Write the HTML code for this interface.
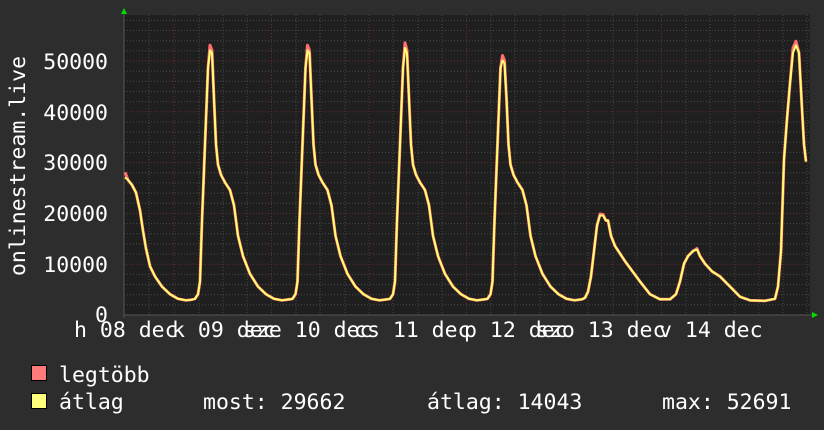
<!DOCTYPE html>
<html><head><meta charset="utf-8"><style>
html,body{margin:0;padding:0;background:#2d2d2d;width:824px;height:430px;overflow:hidden}
svg{display:block}
text{font-family:"DejaVu Sans Mono","Liberation Mono",monospace;fill:#fff;font-size:21.5px}
</style></head><body>
<svg width="824" height="430" viewBox="0 0 824 430">
<rect x="0" y="0" width="824" height="430" fill="#2d2d2d"/>
<rect x="124" y="15" width="686" height="300" fill="#1f1f1f"/>
<g stroke="#4a4a4a" stroke-width="1" stroke-dasharray="1,2">
<line x1="124" x2="810" y1="304.8" y2="304.8"/><line x1="124" x2="810" y1="294.7" y2="294.7"/><line x1="124" x2="810" y1="284.5" y2="284.5"/><line x1="124" x2="810" y1="274.4" y2="274.4"/>
<line x1="124" x2="810" y1="254" y2="254"/><line x1="124" x2="810" y1="243.9" y2="243.9"/><line x1="124" x2="810" y1="233.7" y2="233.7"/><line x1="124" x2="810" y1="223.6" y2="223.6"/>
<line x1="124" x2="810" y1="203.2" y2="203.2"/><line x1="124" x2="810" y1="193.1" y2="193.1"/><line x1="124" x2="810" y1="182.9" y2="182.9"/><line x1="124" x2="810" y1="172.8" y2="172.8"/>
<line x1="124" x2="810" y1="152.4" y2="152.4"/><line x1="124" x2="810" y1="142.3" y2="142.3"/><line x1="124" x2="810" y1="132.1" y2="132.1"/><line x1="124" x2="810" y1="122" y2="122"/>
<line x1="124" x2="810" y1="101.6" y2="101.6"/><line x1="124" x2="810" y1="91.5" y2="91.5"/><line x1="124" x2="810" y1="81.3" y2="81.3"/><line x1="124" x2="810" y1="71.2" y2="71.2"/>
<line x1="124" x2="810" y1="50.8" y2="50.8"/><line x1="124" x2="810" y1="40.7" y2="40.7"/><line x1="124" x2="810" y1="30.5" y2="30.5"/><line x1="124" x2="810" y1="20.4" y2="20.4"/>
<line x1="149" x2="149" y1="15" y2="318"/><line x1="199" x2="199" y1="15" y2="318"/><line x1="223" x2="223" y1="15" y2="318"/><line x1="247" x2="247" y1="15" y2="318"/>
<line x1="296" x2="296" y1="15" y2="318"/><line x1="320" x2="320" y1="15" y2="318"/><line x1="345" x2="345" y1="15" y2="318"/>
<line x1="393" x2="393" y1="15" y2="318"/><line x1="418" x2="418" y1="15" y2="318"/><line x1="442" x2="442" y1="15" y2="318"/>
<line x1="491" x2="491" y1="15" y2="318"/><line x1="515" x2="515" y1="15" y2="318"/><line x1="540" x2="540" y1="15" y2="318"/>
<line x1="588" x2="588" y1="15" y2="318"/><line x1="613" x2="613" y1="15" y2="318"/><line x1="637" x2="637" y1="15" y2="318"/>
<line x1="686" x2="686" y1="15" y2="318"/><line x1="710" x2="710" y1="15" y2="318"/><line x1="735" x2="735" y1="15" y2="318"/>
<line x1="783" x2="783" y1="15" y2="318"/><line x1="807" x2="807" y1="15" y2="318"/>
</g>
<g stroke="#6a2e2e" stroke-width="1" stroke-dasharray="1,2">
<line x1="124" x2="810" y1="264.2" y2="264.2"/><line x1="124" x2="810" y1="213.4" y2="213.4"/><line x1="124" x2="810" y1="162.6" y2="162.6"/><line x1="124" x2="810" y1="111.8" y2="111.8"/><line x1="124" x2="810" y1="61" y2="61"/>
<line x1="174" x2="174" y1="15" y2="318"/><line x1="271.5" x2="271.5" y1="15" y2="318"/><line x1="369" x2="369" y1="15" y2="318"/><line x1="466.5" x2="466.5" y1="15" y2="318"/><line x1="564" x2="564" y1="15" y2="318"/><line x1="661.5" x2="661.5" y1="15" y2="318"/><line x1="759" x2="759" y1="15" y2="318"/>
</g>
<line x1="124" y1="315" x2="812" y2="315" stroke="#555"/>
<line x1="124" y1="12" x2="124" y2="318" stroke="#555"/>
<polygon points="121,14 127,14 124,8" fill="#00dd00"/>
<polygon points="812,312 812,318 818,315" fill="#00dd00"/>
<g transform="translate(0,312) scale(1,-5.08)">
<polyline fill="none" stroke="#ff6f6f" stroke-width="3" vector-effect="non-scaling-stroke" stroke-linejoin="round" points="125,27.5 128,26 132,25 136,23.5 140,20 143,16 146,12.5 150,9 155,7 162,5 170,3.5 178,2.6 186,2.3 191,2.4 195,2.6 198,3.5 200,6 202,18 204,28 206,38 208,48 210,52.5 212,51.5 214,42 216,33 218,29 221,27 225,25.5 230,24 234,21 238,15 243,11 250,7.5 258,5 266,3.5 274,2.6 282,2.3 290,2.5 292.5,2.6 295.5,3.5 297.5,6 299.5,18 301.5,28 303.5,38 305.5,48 307.5,52.5 309.5,51.5 311.5,42 313.5,33 315.5,29 318.5,27 322.5,25.5 327.5,24 331.5,21 335.5,15 340.5,11 347.5,7.5 355.5,5 363.5,3.5 371.5,2.6 379.5,2.3 387.5,2.5 390,2.6 393,3.5 395,6 397,18 399,28 401,38 403,48 405,53 407,51.5 409,42 411,33 413,29 416,27 420,25.5 425,24 429,21 433,15 438,11 445,7.5 453,5 461,3.5 469,2.6 477,2.3 485,2.5 487.5,2.6 490.5,3.5 492.5,6 494.5,18 496.5,28 498.5,38 500.5,48 502.5,50.5 504.5,49.5 506.5,42 508.5,33 510.5,29 513.5,27 517.5,25.5 522.5,24 526.5,21 530.5,15 535.5,11 542.5,7.5 550.5,5 558.5,3.5 566.5,2.6 574.5,2.3 582,2.5 585,2.8 588,4 591,7 594,12 597,17 600,19.3 603,19.2 606,18 608,18 611,15 615,13 625,10 640,6 650,3.5 660,2.5 670,2.5 676,3.5 680,6 684,9.5 688,11 693,12 697,12.5 700,11 705,9.5 712,8 720,7 730,5 740,3 750,2.3 765,2.2 775,2.6 778,5 781,12 784,30 787,38 790,45 793,52 796,53.3 799,51 802,40 804,33 806,29.6"/>
<polyline fill="none" stroke="#ffff70" stroke-width="2" vector-effect="non-scaling-stroke" stroke-linejoin="round" points="125,26.5 128,26 132,25 136,23.5 140,20 143,16 146,12.5 150,9 155,7 162,5 170,3.5 178,2.6 186,2.3 191,2.4 195,2.6 198,3.5 200,6 202,18 204,28 206,38 208,48 210,51.5 212,51 214,42 216,33 218,29 221,27 225,25.5 230,24 234,21 238,15 243,11 250,7.5 258,5 266,3.5 274,2.6 282,2.3 290,2.5 292.5,2.6 295.5,3.5 297.5,6 299.5,18 301.5,28 303.5,38 305.5,48 307.5,51.5 309.5,51 311.5,42 313.5,33 315.5,29 318.5,27 322.5,25.5 327.5,24 331.5,21 335.5,15 340.5,11 347.5,7.5 355.5,5 363.5,3.5 371.5,2.6 379.5,2.3 387.5,2.5 390,2.6 393,3.5 395,6 397,18 399,28 401,38 403,48 405,52 407,51 409,42 411,33 413,29 416,27 420,25.5 425,24 429,21 433,15 438,11 445,7.5 453,5 461,3.5 469,2.6 477,2.3 485,2.5 487.5,2.6 490.5,3.5 492.5,6 494.5,18 496.5,28 498.5,38 500.5,48 502.5,49.5 504.5,49 506.5,42 508.5,33 510.5,29 513.5,27 517.5,25.5 522.5,24 526.5,21 530.5,15 535.5,11 542.5,7.5 550.5,5 558.5,3.5 566.5,2.6 574.5,2.3 582,2.5 585,2.8 588,4 591,7 594,12 597,17 600,19 603,19 606,18 608,18 611,15 615,13 625,10 640,6 650,3.5 660,2.5 670,2.5 676,3.5 680,6 684,9.5 688,11 693,12 697,12.3 700,11 705,9.5 712,8 720,7 730,5 740,3 750,2.3 765,2.2 775,2.6 778,5 781,12 784,30 787,38 790,45 793,51 796,52.5 799,51 802,40 804,33 806,29.6"/>
</g>
<g text-anchor="end">
<text x="108" y="69">50000</text><text x="108" y="120">40000</text><text x="108" y="170">30000</text><text x="108" y="221">20000</text><text x="108" y="272">10000</text><text x="108" y="322">0</text>
</g>
<text transform="translate(25,166) rotate(-90)" text-anchor="middle">onlinestream.live</text>
<g>
<text x="74" y="337">h 08 dec</text>
<text x="172" y="337">k 09 dec</text>
<text x="243" y="337">sze 10 dec</text>
<text x="354" y="337">cs 11 dec</text>
<text x="464" y="337">p 12 dec</text>
<text x="536" y="337">szo 13 dec</text>
<text x="659" y="337">v 14 dec</text>
</g>
<rect x="31.5" y="365.5" width="15" height="15" fill="#ff7b7b" stroke="#000"/>
<rect x="31.5" y="393.5" width="15" height="15" fill="#ffff7b" stroke="#000"/>
<text x="59" y="382">legtöbb</text>
<text x="59" y="409">átlag</text>
<text x="203" y="409">most: 29662</text>
<text x="427" y="409">átlag: 14043</text>
<text x="662" y="409">max: 52691</text>
</svg>
</body></html>
